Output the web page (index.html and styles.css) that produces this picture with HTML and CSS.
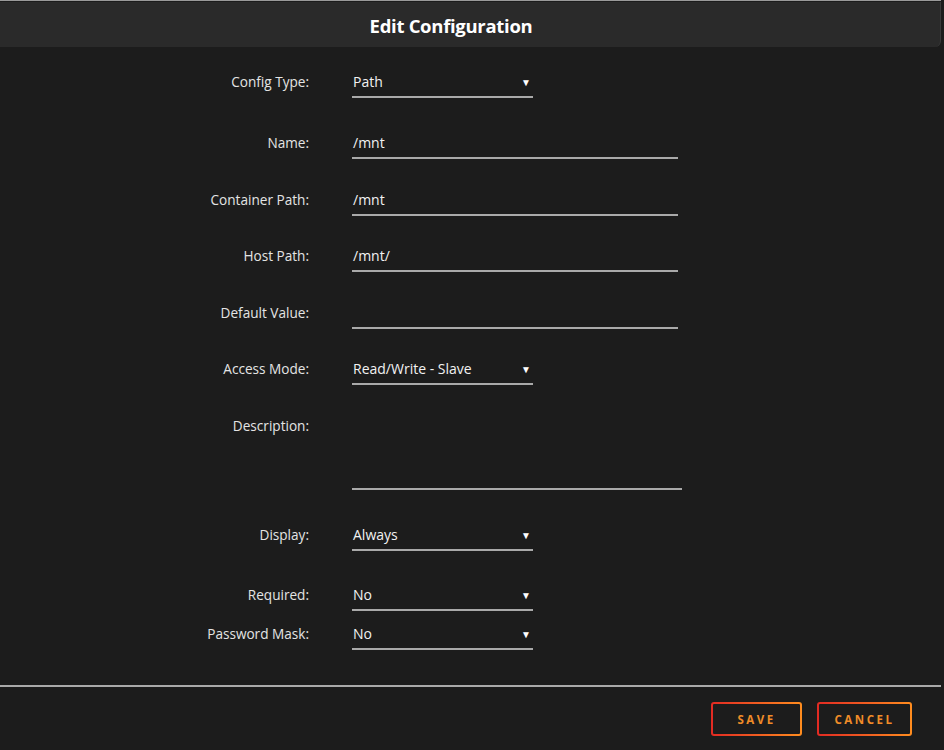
FILE: index.html
```html
<!DOCTYPE html>
<html lang="en">
<head>
  <meta charset="UTF-8">
  <title>Edit Configuration</title>
  <link rel="stylesheet" href="styles.css">
</head>
<body>
<div class="dialog">
  <div class="title-bar">Edit Configuration</div>
  <div class="form">
    <div class="row first">
      <label>Config Type:</label>
      <div class="field select">Path<span class="caret">&#9660;</span></div>
    </div>
    <div class="row">
      <label>Name:</label>
      <div class="field text">/mnt</div>
    </div>
    <div class="row">
      <label>Container Path:</label>
      <div class="field text">/mnt</div>
    </div>
    <div class="row">
      <label>Host Path:</label>
      <div class="field text">/mnt/</div>
    </div>
    <div class="row">
      <label>Default Value:</label>
      <div class="field text"></div>
    </div>
    <div class="row">
      <label>Access Mode:</label>
      <div class="field select">Read/Write - Slave<span class="caret">&#9660;</span></div>
    </div>
    <div class="row wide-after">
      <label>Description:</label>
      <div class="field area"></div>
    </div>
    <div class="row wide-after small">
      <label>Display:</label>
      <div class="field select">Always<span class="caret">&#9660;</span></div>
    </div>
    <div class="row tight-after">
      <label>Required:</label>
      <div class="field select">No<span class="caret">&#9660;</span></div>
    </div>
    <div class="row">
      <label>Password Mask:</label>
      <div class="field select">No<span class="caret">&#9660;</span></div>
    </div>
  </div>
  <div class="footer">
    <button class="btn">SAVE</button>
    <button class="btn">CANCEL</button>
  </div>
</div>
</body>
</html>
```

FILE: styles.css
```css
html, body { margin: 0; padding: 0; background: #1c1c1c; }
body { font-family: "Open Sans", "Liberation Sans", sans-serif; color: #e6e6e6; width: 944px; height: 750px; overflow: hidden; }
.dialog { width: 941px; border-top: 1px solid #9a9a9a; }
.title-bar { height: 45px; margin-top: 1px; padding-right: 38px; background: #2a2a2a; border-bottom-right-radius: 6px; border-right: 1px solid #3a3a3a; color: #fff; font-weight: 700; font-size: 18.5px; line-height: 47px; text-align: center; letter-spacing: -0.3px; }
.form { display: flex; flex-direction: column; gap: 28.5px; padding-top: 23px; }
.row { display: grid; grid-template-columns: 309px 1fr; column-gap: 43px; align-items: start; }
.row.first { margin-bottom: 4.5px; }
.row.wide-after { margin-bottom: 5px; }
.row.small { margin-bottom: 3.5px; }
.row.tight-after { margin-bottom: -17.5px; }
label { font-size: 13.6px; line-height: 20px; padding-top: 2px; text-align: right; color: #e4e4e4; }
.field { position: relative; box-sizing: border-box; font-size: 14px; line-height: 20px; padding: 2px 0 4px 1px; border-bottom: 2px solid #a9a9a9; color: #f2f2f2; height: 28px; }
.field.select { width: 181px; }
.field.text { width: 326px; }
.field.area { width: 330px; height: 76px; }
.caret { position: absolute; right: 2px; top: 2px; font-size: 10px; color: #fff; }
.footer { margin-top: 35px; border-top: 2px solid #a9a9a9; display: flex; justify-content: flex-end; gap: 15px; padding: 15px 29px 0 0; }
.btn { height: 34px; padding: 0; border: 2px solid transparent; border-radius: 3px; background: linear-gradient(#1c1c1c, #1c1c1c) padding-box, linear-gradient(90deg, #e22a23, #ff8d1f) border-box; color: #f08c28; font-family: "Open Sans", "Liberation Sans", sans-serif; font-weight: 700; font-size: 11.5px; letter-spacing: 2.5px; cursor: pointer; }
.btn:first-child { width: 91px; }
.btn:last-child { width: 95px; }
```
